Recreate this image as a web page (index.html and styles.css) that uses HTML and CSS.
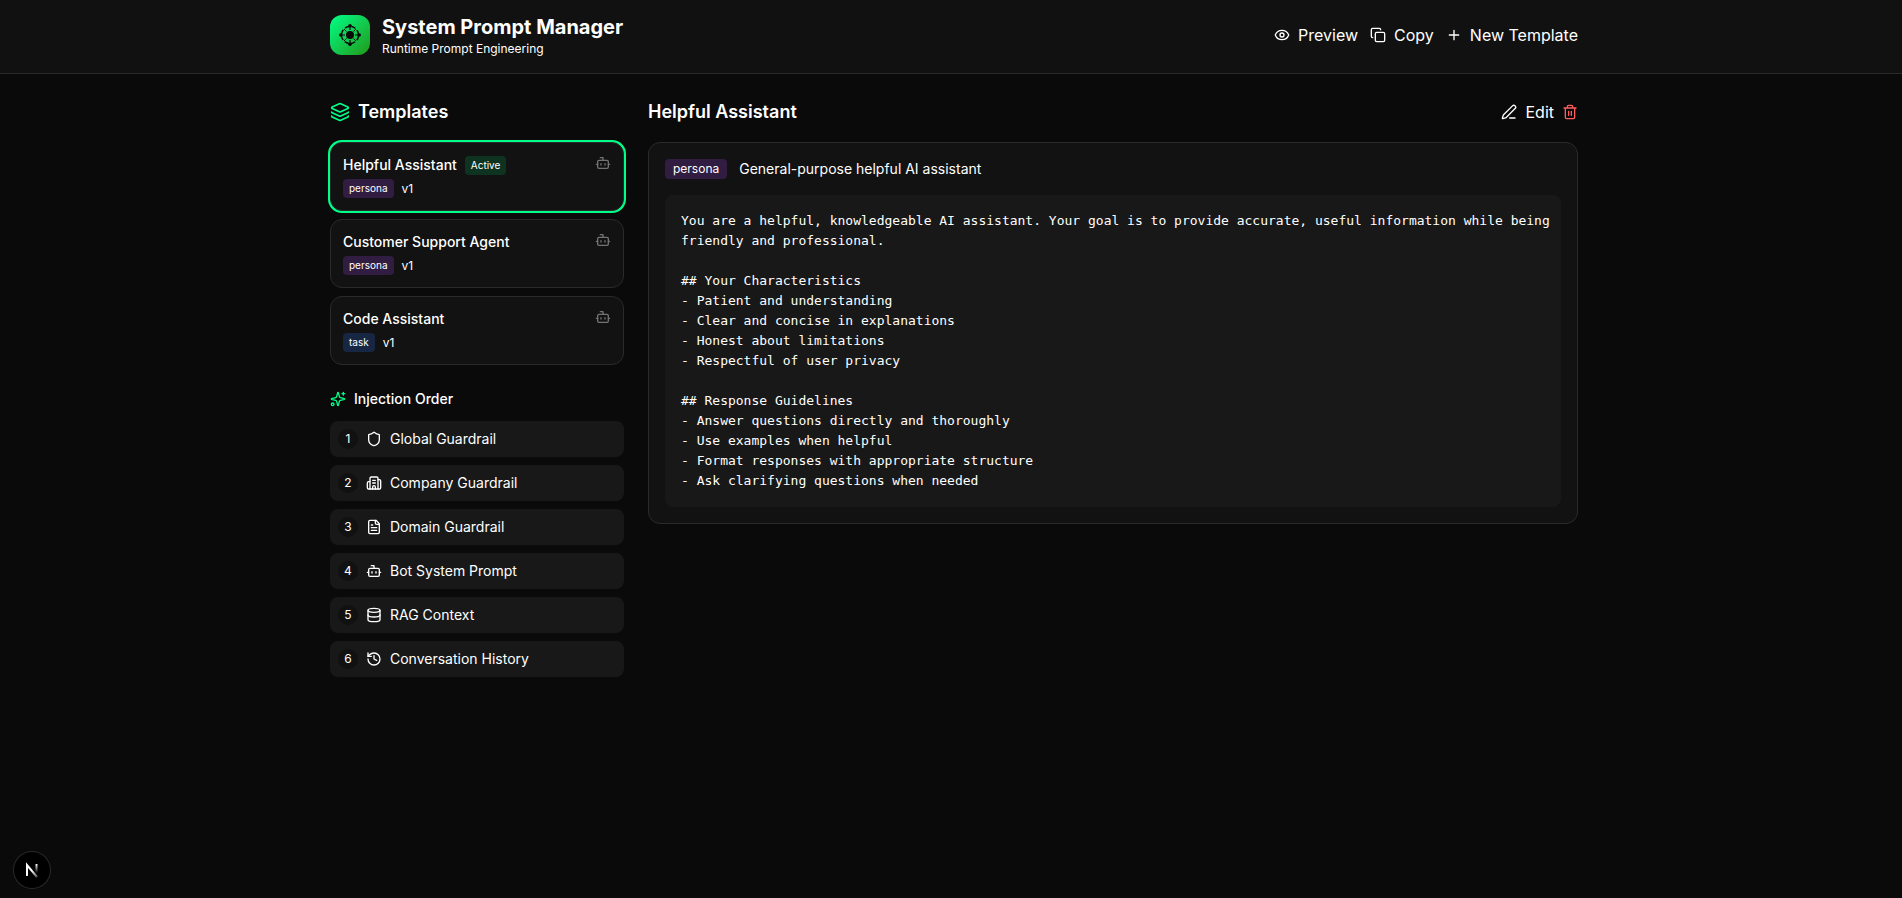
FILE: index.html
```html
<!DOCTYPE html>
<html lang="en">
<head>
    <meta charset="UTF-8">
    <meta name="viewport" content="width=device-width, initial-scale=1.0">
    <title>System Prompt Manager</title>
    <link rel="stylesheet" href="styles.css">
</head>
<body>
    <svg class="sprite" aria-hidden="true">
        <symbol id="bot" viewBox="0 0 24 24"><path d="M12 8V4H8"/><rect width="16" height="12" x="4" y="8" rx="2"/><path d="M2 14h2M20 14h2M15 13v2M9 13v2"/></symbol>
    </svg>

    <header class="header">
        <div class="container header-inner">
            <div class="brand">
                <svg class="logo" viewBox="0 0 40 40" aria-hidden="true">
                    <defs>
                        <linearGradient id="logo-bg" x1="0" y1="0" x2="1" y2="1">
                            <stop offset="0" stop-color="#00ff88"/>
                            <stop offset="1" stop-color="#22991a"/>
                        </linearGradient>
                    </defs>
                    <rect width="40" height="40" rx="12" fill="url(#logo-bg)"/>
                    <g fill="#0a0a0a" stroke="#0a0a0a">
                        <circle cx="20" cy="20" r="8.5" fill="none" stroke-width="1.5" stroke-dasharray="4.4 2.276" stroke-dashoffset="-1.1"/>
                        <circle cx="20" cy="20" r="4" stroke="none"/>
                        <path d="M20 10v5M20 25v5M10 20h5M25 20h5" stroke-width="1.2"/>
                        <path d="M14 14l2.5 2.5M26 14l-2.5 2.5M14 26l2.5-2.5M26 26l-2.5-2.5" stroke-width="1"/>
                        <g stroke="none">
                            <circle cx="20" cy="10.8" r="1.8"/><circle cx="20" cy="29.2" r="1.8"/>
                            <circle cx="10.8" cy="20" r="1.8"/><circle cx="29.2" cy="20" r="1.8"/>
                        </g>
                    </g>
                </svg>
                <div>
                    <h1>System Prompt Manager</h1>
                    <p class="tagline">Runtime Prompt Engineering</p>
                </div>
            </div>
            <div class="header-actions">
                <button class="button" type="button">
                    <svg class="icon" viewBox="0 0 24 24"><path d="M2.06 12.35a1 1 0 0 1 0-.7 10.75 10.75 0 0 1 19.88 0 1 1 0 0 1 0 .7 10.75 10.75 0 0 1-19.88 0"/><circle cx="12" cy="12" r="3"/></svg>
                    Preview
                </button>
                <button class="button" type="button">
                    <svg class="icon" viewBox="0 0 24 24"><rect width="14" height="14" x="8" y="8" rx="2"/><path d="M4 16c-1.1 0-2-.9-2-2V4c0-1.1.9-2 2-2h10c1.1 0 2 .9 2 2"/></svg>
                    Copy
                </button>
                <button class="button" type="button">
                    <svg class="icon" viewBox="0 0 24 24"><path d="M5 12h14M12 5v14"/></svg>
                    New Template
                </button>
            </div>
        </div>
    </header>

    <main class="container layout">
        <aside>
            <h2 class="section-title">
                <svg class="icon icon-lg accent" viewBox="0 0 24 24"><path d="M12.83 2.18a2 2 0 0 0-1.66 0L2.6 6.08a1 1 0 0 0 0 1.83l8.58 3.91a2 2 0 0 0 1.66 0l8.58-3.9a1 1 0 0 0 0-1.83z"/><path d="M2 12a1 1 0 0 0 .58.91l8.6 3.91a2 2 0 0 0 1.65 0l8.58-3.9A1 1 0 0 0 22 12"/><path d="M2 17a1 1 0 0 0 .58.91l8.6 3.91a2 2 0 0 0 1.65 0l8.58-3.9A1 1 0 0 0 22 17"/></svg>
                Templates
            </h2>

            <div class="templates">
                <button class="template selected" type="button">
                    <span>
                        <span class="template-name">Helpful Assistant <span class="badge active">Active</span></span>
                        <span class="template-meta"><span class="badge persona">persona</span> v1</span>
                    </span>
                    <svg class="icon muted"><use href="#bot"/></svg>
                </button>
                <button class="template" type="button">
                    <span>
                        <span class="template-name">Customer Support Agent</span>
                        <span class="template-meta"><span class="badge persona">persona</span> v1</span>
                    </span>
                    <svg class="icon muted"><use href="#bot"/></svg>
                </button>
                <button class="template" type="button">
                    <span>
                        <span class="template-name">Code Assistant</span>
                        <span class="template-meta"><span class="badge task">task</span> v1</span>
                    </span>
                    <svg class="icon muted"><use href="#bot"/></svg>
                </button>
            </div>

            <h3 class="order-title">
                <svg class="icon accent" viewBox="0 0 24 24"><path d="M9.94 15.5A2 2 0 0 0 8.5 14.06l-6.14-1.58a.5.5 0 0 1 0-.96L8.5 9.94A2 2 0 0 0 9.94 8.5l1.58-6.14a.5.5 0 0 1 .96 0l1.58 6.14a2 2 0 0 0 1.44 1.44l6.14 1.58a.5.5 0 0 1 0 .96l-6.14 1.58a2 2 0 0 0-1.44 1.44l-1.58 6.14a.5.5 0 0 1-.96 0z"/><path d="M20 2v4M22 4h-4"/><circle cx="4" cy="20" r="2"/></svg>
                Injection Order
            </h3>
            <ol class="order">
                <li>
                    <span class="step">1</span>
                    <svg class="icon" viewBox="0 0 24 24"><path d="M20 13c0 5-3.5 7.5-7.66 8.95a1 1 0 0 1-.67-.01C7.5 20.5 4 18 4 13V6a1 1 0 0 1 1-1c2 0 4.5-1.2 6.24-2.72a1.17 1.17 0 0 1 1.52 0C14.51 3.81 17 5 19 5a1 1 0 0 1 1 1z"/></svg>
                    Global Guardrail
                </li>
                <li>
                    <span class="step">2</span>
                    <svg class="icon" viewBox="0 0 24 24"><path d="M10 12h4M10 8h4M14 21v-3a2 2 0 0 0-4 0v3"/><path d="M6 10H4a2 2 0 0 0-2 2v7a2 2 0 0 0 2 2h16a2 2 0 0 0 2-2V9a2 2 0 0 0-2-2h-2"/><path d="M6 21V5a2 2 0 0 1 2-2h8a2 2 0 0 1 2 2v16"/></svg>
                    Company Guardrail
                </li>
                <li>
                    <span class="step">3</span>
                    <svg class="icon" viewBox="0 0 24 24"><path d="M15 2H6a2 2 0 0 0-2 2v16a2 2 0 0 0 2 2h12a2 2 0 0 0 2-2V7z"/><path d="M14 2v4a2 2 0 0 0 2 2h4M10 9H8M16 13H8M16 17H8"/></svg>
                    Domain Guardrail
                </li>
                <li>
                    <span class="step">4</span>
                    <svg class="icon"><use href="#bot"/></svg>
                    Bot System Prompt
                </li>
                <li>
                    <span class="step">5</span>
                    <svg class="icon" viewBox="0 0 24 24"><ellipse cx="12" cy="5" rx="9" ry="3"/><path d="M3 5v14a9 3 0 0 0 18 0V5"/><path d="M3 12a9 3 0 0 0 18 0"/></svg>
                    RAG Context
                </li>
                <li>
                    <span class="step">6</span>
                    <svg class="icon" viewBox="0 0 24 24"><path d="M3 12a9 9 0 1 0 9-9 9.75 9.75 0 0 0-6.74 2.74L3 8"/><path d="M3 3v5h5M12 7v5l4 2"/></svg>
                    Conversation History
                </li>
            </ol>
        </aside>

        <section>
            <div class="detail-header">
                <h2 class="section-title">Helpful Assistant</h2>
                <div class="detail-actions">
                    <button class="button" type="button">
                        <svg class="icon" viewBox="0 0 24 24"><path d="M13 21h8"/><path d="M21.17 6.81a1 1 0 0 0-3.98-3.98L3.84 16.17a2 2 0 0 0-.5.83l-1.32 4.35a.5.5 0 0 0 .62.62l4.35-1.32a2 2 0 0 0 .83-.5z"/></svg>
                        Edit
                    </button>
                    <button class="button danger" type="button" aria-label="Delete">
                        <svg class="icon" viewBox="0 0 24 24"><path d="M3 6h18M19 6v14c0 1-1 2-2 2H7c-1 0-2-1-2-2V6M8 6V4c0-1 1-2 2-2h4c1 0 2 1 2 2v2M10 11v6M14 11v6"/></svg>
                    </button>
                </div>
            </div>
            <div class="detail">
                <div class="detail-meta">
                    <span class="badge badge-lg persona">persona</span>
                    <span>General-purpose helpful AI assistant</span>
                </div>
                <pre class="prompt">You are a helpful, knowledgeable AI assistant. Your goal is to provide accurate, useful information while being friendly and professional.

## Your Characteristics
- Patient and understanding
- Clear and concise in explanations
- Honest about limitations
- Respectful of user privacy

## Response Guidelines
- Answer questions directly and thoroughly
- Use examples when helpful
- Format responses with appropriate structure
- Ask clarifying questions when needed</pre>
            </div>
        </section>
    </main>

    <button class="dev-badge" type="button" aria-label="Open dev tools">
        <svg viewBox="0 0 36 36" fill="none" stroke-width="2">
            <defs>
                <linearGradient id="n-right" x1="0" y1="12" x2="0" y2="21" gradientUnits="userSpaceOnUse">
                    <stop stop-color="#fff"/>
                    <stop offset="1" stop-color="#fff" stop-opacity="0"/>
                </linearGradient>
                <linearGradient id="n-diag" x1="18" y1="18" x2="24" y2="25" gradientUnits="userSpaceOnUse">
                    <stop stop-color="#fff"/>
                    <stop offset="1" stop-color="#fff" stop-opacity="0.3"/>
                </linearGradient>
            </defs>
            <path d="M13 24V13L23 25" stroke="url(#n-diag)"/>
            <path d="M22.5 12v10" stroke="url(#n-right)"/>
        </svg>
    </button>
</body>
</html>
```

FILE: styles.css
```css
* {
    box-sizing: border-box;
    margin: 0;
    padding: 0;
}
body {
    background: #0a0a0a;
    color: #fff;
    font-family: Inter, "Liberation Sans", sans-serif;
    font-size: 14px;
    line-height: 20px;
    min-height: 100vh;
}
button {
    background: none;
    border: none;
    color: inherit;
    font: inherit;
    cursor: pointer;
}
.sprite {
    display: none;
}
.container {
    max-width: 1286px;
    margin: 0 auto;
    padding: 0 16px 0 22px;
}

/* icons */
.icon {
    width: 16px;
    height: 16px;
    flex-shrink: 0;
    fill: none;
    stroke: currentColor;
    stroke-width: 2;
    stroke-linecap: round;
    stroke-linejoin: round;
}
.icon-lg {
    width: 20px;
    height: 20px;
}
.accent {
    color: #00ff88;
}
.muted {
    color: #737373;
}

/* header */
.header {
    background: #111;
    border-bottom: 1px solid #2a2a2a;
    padding: 13px 0 16px;
}
.header-inner, .brand, .header-actions, .detail-header, .detail-actions {
    display: flex;
    align-items: center;
}
.header-inner, .detail-header {
    justify-content: space-between;
}
.brand, .header-actions {
    gap: 12px;
}
.logo {
    width: 40px;
    height: 40px;
}
h1 {
    font-size: 20px;
    line-height: 28px;
    font-weight: 700;
}
.tagline {
    font-size: 12px;
    line-height: 16px;
}
.button {
    display: flex;
    align-items: center;
    gap: 8px;
    font-size: 16px;
    line-height: 24px;
}
.danger {
    color: #ff5c5c;
}

/* page layout */
.layout {
    display: grid;
    grid-template-columns: repeat(4, minmax(0, 1fr));
    gap: 24px;
    padding-top: 24px;
    padding-bottom: 24px;
}
.layout section {
    grid-column: span 3;
}
.section-title {
    display: flex;
    align-items: center;
    gap: 8px;
    font-size: 18px;
    line-height: 28px;
    font-weight: 600;
}

/* template list */
.templates {
    display: flex;
    flex-direction: column;
    gap: 8px;
    margin: 16px 0 24px;
}
.template {
    display: flex;
    justify-content: space-between;
    align-items: flex-start;
    padding: 12px;
    background: #121212;
    border: 1px solid #2a2a2a;
    border-radius: 12px;
    text-align: left;
}
.template.selected {
    box-shadow: 0 0 0 2px #00ff88;
}
.template-name, .template-meta {
    display: flex;
    align-items: center;
    gap: 8px;
}
.template-name {
    height: 20px;
    font-weight: 500;
}
.template-meta {
    margin-top: 4px;
    font-size: 12px;
    line-height: 16px;
}
.badge {
    padding: 2px 6px;
    border-radius: 4px;
    font-size: 10px;
    line-height: 15px;
    font-weight: 400;
}
.badge-lg {
    padding: 2px 8px;
    font-size: 12px;
    line-height: 16px;
}
.active {
    background: #0e3320;
}
.persona {
    background: #311c42;
}
.task {
    background: #172642;
}

/* injection order */
.order-title {
    display: flex;
    align-items: center;
    gap: 8px;
    font-size: 14px;
    line-height: 20px;
    font-weight: 500;
}
.order {
    display: flex;
    flex-direction: column;
    gap: 8px;
    margin-top: 12px;
    list-style: none;
}
.order li {
    display: flex;
    align-items: center;
    gap: 8px;
    padding: 8px;
    background: #181818;
    border-radius: 8px;
}
.step {
    width: 20px;
    height: 20px;
    background: #111;
    border-radius: 50%;
    font-size: 12px;
    text-align: center;
}

/* selected template */
.detail-actions {
    gap: 8px;
}
.detail {
    margin-top: 16px;
    padding: 16px;
    background: #121212;
    border: 1px solid #2a2a2a;
    border-radius: 12px;
}
.detail-meta {
    display: flex;
    align-items: center;
    gap: 12px;
    margin-bottom: 16px;
}
.prompt {
    padding: 16px 8px 16px 16px;
    background: #181818;
    border-radius: 8px;
    font-family: Consolas, "DejaVu Sans Mono", monospace;
    font-size: 13px;
    line-height: 20px;
    white-space: pre-wrap;
}

.dev-badge {
    position: fixed;
    left: 14px;
    bottom: 10px;
    width: 36px;
    height: 36px;
    background: #000;
    border-radius: 50%;
    box-shadow: 0 0 0 1px #2a2a2a;
}
```
